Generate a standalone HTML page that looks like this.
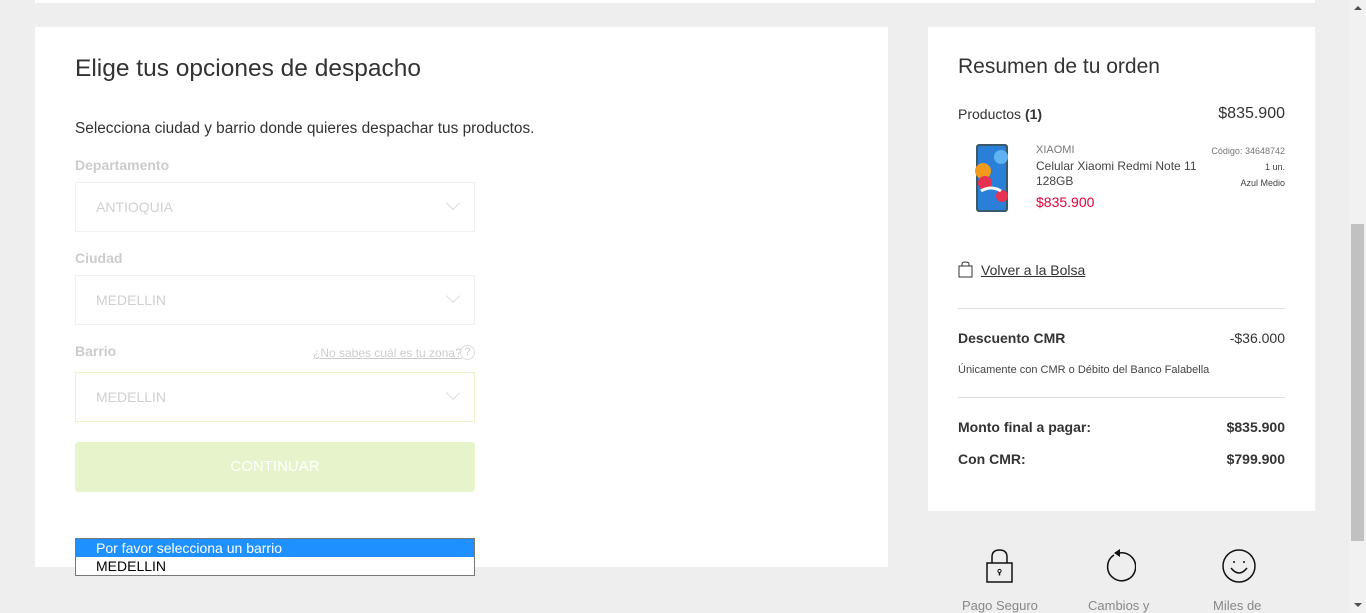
<!DOCTYPE html>
<html><head><meta charset="utf-8"><style>
*{margin:0;padding:0;box-sizing:border-box}
body{width:1366px;height:612px;overflow:hidden;background:#eeeeee;font-family:"Liberation Sans",sans-serif;position:relative;color:#333}
.abs{position:absolute}
.card{position:absolute;background:#fff}
.lbl{position:absolute;left:75px;font-size:14px;color:#ccc;font-weight:bold}
.sel{position:absolute;left:75px;width:400px;height:50px;border:1px solid #f0f0f0;font-size:14px;color:#d0d0d0;padding-left:20px;line-height:48px}
.chev{position:absolute;right:16px;top:15px;width:10px;height:10px;border-right:1px solid #ddd;border-bottom:1px solid #ddd;transform:rotate(45deg)}
.r{position:absolute;font-size:14px;color:#333}
.b{font-weight:bold}
</style></head><body>
<div class="card" style="left:35px;top:0;width:1280px;height:3px"></div>
<div class="card" style="left:35px;top:27px;width:853px;height:540px"></div>
<div class="card" style="left:928px;top:27px;width:387px;height:484px"></div>

<div class="abs" style="left:75px;top:55px;font-size:24.5px;color:#333">Elige tus opciones de despacho</div>
<div class="abs" style="left:75px;top:120px;font-size:15.4px;color:#333">Selecciona ciudad y barrio donde quieres despachar tus productos.</div>
<div class="lbl" style="top:157px">Departamento</div>
<div class="sel" style="top:182px">ANTIOQUIA<div class="chev"></div></div>
<div class="lbl" style="top:250px">Ciudad</div>
<div class="sel" style="top:275px">MEDELLIN<div class="chev"></div></div>
<div class="lbl" style="top:343px">Barrio</div>
<div class="abs" style="left:313px;top:346px;font-size:12px;color:#ccc;text-decoration:underline">¿No sabes cuál es tu zona?</div>
<div class="abs" style="left:460px;top:345px;width:15px;height:15px;border:1px solid #ddd;border-radius:50%;font-size:11px;color:#ccc;text-align:center;line-height:13px">?</div>
<div class="sel" style="top:372px;border-color:#eef2c8">MEDELLIN<div class="chev"></div></div>
<div class="abs" style="left:75px;top:442px;width:400px;height:50px;background:#e6f3cb;border-radius:4px;color:#fff;font-size:15px;text-align:center;line-height:50px">CONTINUAR</div>
<div class="abs" style="left:75px;top:538px;width:400px;height:38px;border:1px solid #777;background:#fff;font-size:14px">
<div style="background:#1e90ff;color:#fff;height:18px;line-height:18px;padding-left:20px">Por favor selecciona un barrio</div>
<div style="color:#000;height:18px;line-height:18px;padding-left:20px">MEDELLIN</div></div>

<div class="abs" style="left:958px;top:55px;font-size:21px;color:#333">Resumen de tu orden</div>
<div class="r" style="left:958px;top:106px">Productos <span class="b">(1)</span></div>
<div class="r" style="right:81px;top:105px;font-size:16px">$835.900</div>
<svg class="abs" style="left:975px;top:143px" width="36" height="71" viewBox="0 0 36 71">
<rect x="1" y="1" width="32" height="68" rx="3" fill="#3a5a6a"/><rect x="3" y="3" width="28" height="64" rx="2" fill="#2a7fd8"/>
<circle cx="26" cy="14" r="7" fill="#5fb3f0"/><circle cx="8" cy="28" r="8" fill="#f29a1c"/><circle cx="10" cy="40" r="7" fill="#e83050"/><circle cx="27" cy="53" r="6" fill="#e83050"/><path d="M6 48q10-6 20 0" stroke="#fff" stroke-width="3" fill="none"/></svg>
<div class="abs" style="left:1036px;top:144px;font-size:11px;color:#777">XIAOMI</div>
<div class="abs" style="left:1036px;top:159px;font-size:12px;color:#444;line-height:15px;width:175px">Celular Xiaomi Redmi Note 11<br>128GB</div>
<div class="abs" style="left:1036px;top:194px;font-size:14px;color:#e4003a">$835.900</div>
<div class="abs" style="right:81px;top:143px;font-size:9px;color:#777;text-align:right;line-height:16px">Código: 34648742<br><span style="color:#444">1 un.</span><br><span style="color:#444">Azul Medio</span></div>
<svg class="abs" style="left:958px;top:261px" width="15" height="17" viewBox="0 0 15 17"><rect x="1" y="5" width="13" height="11" fill="none" stroke="#333"/><path d="M4 5V3q0-2 3.5-2T11 3v2" fill="none" stroke="#333"/></svg>
<div class="r" style="left:981px;top:262px;text-decoration:underline">Volver a la Bolsa</div>
<div class="abs" style="left:958px;top:308px;width:327px;height:1px;background:#ddd"></div>
<div class="r b" style="left:958px;top:330px">Descuento CMR</div>
<div class="r" style="right:81px;top:330px">-$36.000</div>
<div class="abs" style="left:958px;top:364px;font-size:11px;color:#444">Únicamente con CMR o Débito del Banco Falabella</div>
<div class="abs" style="left:958px;top:397px;width:327px;height:1px;background:#ddd"></div>
<div class="r b" style="left:958px;top:419px">Monto final a pagar:</div>
<div class="r b" style="right:81px;top:419px">$835.900</div>
<div class="r b" style="left:958px;top:451px">Con CMR:</div>
<div class="r b" style="right:81px;top:451px">$799.900</div>

<svg class="abs" style="left:985px;top:548px" width="30" height="36" viewBox="0 0 30 36"><rect x="2" y="15" width="25" height="19" fill="none" stroke="#111" stroke-width="1.5"/><path d="M7 15V9q0-7 7.5-7T22 9v6" fill="none" stroke="#111" stroke-width="1.5"/><circle cx="14.5" cy="23" r="1.6" fill="none" stroke="#111"/><path d="M14.5 24.5v3" stroke="#111" stroke-width="1.5"/></svg>
<svg class="abs" style="left:1102px;top:548px" width="34" height="36" viewBox="0 0 34 36"><path d="M12 7A14 14 0 1 0 17 5" fill="none" stroke="#111" stroke-width="1.5"/><path d="M18 1l-6 4 6 4z" fill="#111"/></svg>
<svg class="abs" style="left:1221px;top:548px" width="36" height="36" viewBox="0 0 36 36"><circle cx="18" cy="18" r="16" fill="none" stroke="#111" stroke-width="1.5"/><circle cx="13" cy="14" r="1" fill="#111"/><circle cx="23" cy="14" r="1" fill="#111"/><path d="M10 20q8 10 16 0" fill="none" stroke="#111" stroke-width="1.5"/></svg>
<div class="abs" style="left:962px;top:598px;font-size:13px;color:#888">Pago Seguro</div>
<div class="abs" style="left:1088px;top:598px;font-size:13px;color:#888">Cambios y</div>
<div class="abs" style="left:1213px;top:598px;font-size:13px;color:#888">Miles de</div>

<div class="abs" style="left:1349px;top:0;width:17px;height:612px;background:#f1f1f1"></div>
<div class="abs" style="left:1351px;top:224px;width:13px;height:317px;background:#c1c1c1"></div>
<div class="abs" style="left:1354px;top:6px;width:0;height:0;border-left:4px solid transparent;border-right:4px solid transparent;border-bottom:4px solid #505050"></div>
<div class="abs" style="left:1354px;top:603px;width:0;height:0;border-left:4px solid transparent;border-right:4px solid transparent;border-top:4px solid #505050"></div>
</body></html>
